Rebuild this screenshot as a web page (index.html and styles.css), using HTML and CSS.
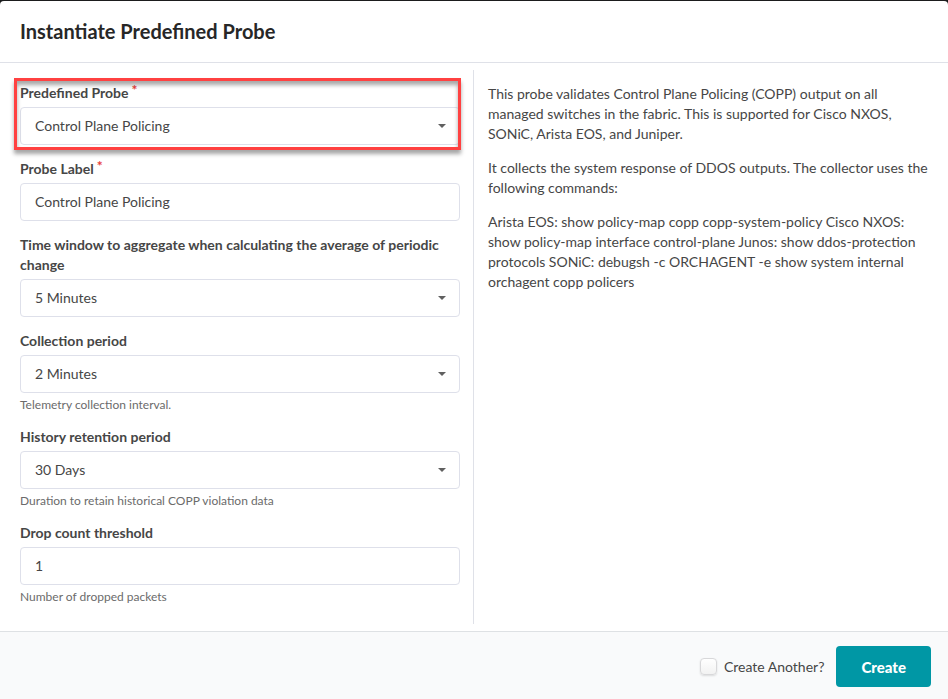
FILE: index.html
```
<!DOCTYPE html>
<html lang="en">

<head>
    <meta charset="UTF-8">
    <meta name="viewport" content="width=device-width, initial-scale=1.0">
    <title>Instantiate Predefined Probe</title>
    <link rel="stylesheet" href="styles.css">
</head>

<body>
    <form class="modal">
        <header class="modal-header">
            <h1>Instantiate Predefined Probe</h1>
        </header>

        <div class="modal-content">
            <div class="fields">
                <div class="field highlight">
                    <label for="probe" class="required">Predefined Probe</label>
                    <div class="dropdown">
                        <select id="probe">
                            <option>Control Plane Policing</option>
                        </select>
                    </div>
                </div>
                <div class="field">
                    <label for="label" class="required">Probe Label</label>
                    <input type="text" id="label" value="Control Plane Policing">
                </div>
                <div class="field">
                    <label for="window">Time window to aggregate when calculating the average of periodic change</label>
                    <div class="dropdown">
                        <select id="window">
                            <option>5 Minutes</option>
                        </select>
                    </div>
                </div>
                <div class="field">
                    <label for="collection">Collection period</label>
                    <div class="dropdown">
                        <select id="collection">
                            <option>2 Minutes</option>
                        </select>
                    </div>
                    <p class="help">Telemetry collection interval.</p>
                </div>
                <div class="field">
                    <label for="history">History retention period</label>
                    <div class="dropdown">
                        <select id="history">
                            <option>30 Days</option>
                        </select>
                    </div>
                    <p class="help">Duration to retain historical COPP violation data</p>
                </div>
                <div class="field">
                    <label for="threshold">Drop count threshold</label>
                    <input type="text" id="threshold" value="1">
                    <p class="help">Number of dropped packets</p>
                </div>
            </div>

            <div class="description">
                <p>This probe validates Control Plane Policing (COPP) output on all managed switches in the fabric. This is supported for Cisco NXOS, SONiC, Arista EOS, and Juniper.</p>
                <p>It collects the system response of DDOS outputs. The collector uses the following commands:</p>
                <p>Arista EOS: show policy-map copp copp-system-policy Cisco NXOS: show policy-map interface control-plane Junos: show ddos-protection protocols SONiC: debugsh -c ORCHAGENT -e show system internal orchagent copp policers</p>
            </div>
        </div>

        <footer class="modal-footer">
            <label class="another">
                <input type="checkbox">
                Create Another?
            </label>
            <button type="button" class="create">Create</button>
        </footer>
    </form>
</body>

</html>
```
FILE: styles.css
```
* {
    box-sizing: border-box;
}

body {
    margin: 0;
    background-color: #1b1c1d;
    font-family: Lato, "Liberation Sans", sans-serif;
    font-size: 14px;
    line-height: 20px;
    color: #464646;
}

.modal {
    display: flex;
    flex-direction: column;
    min-height: 100vh;
    border-top: 1px solid #1b1c1d;
}

.modal-header {
    padding: 16px 20px 17px;
    background-color: #fff;
    border-bottom: 1px solid #dfe1e8;
    border-radius: 4px 4px 0 0;
}

.modal-header h1 {
    margin: 0;
    font-size: 20px;
    line-height: 28px;
    font-weight: 700;
    color: #272727;
}

/* Two columns with a divider */
.modal-content {
    flex: 1;
    display: grid;
    grid-template-columns: 1fr 1fr;
    padding: 7px 0;
    background-color: #fff;
}

.fields {
    display: flex;
    flex-direction: column;
    gap: 14px;
    padding: 13px 13px 13px 20px;
    border-right: 1px solid #dfe1e8;
}

.field label {
    display: block;
    margin-bottom: 4px;
    font-weight: 700;
}

.required::after {
    content: "*";
    margin-left: 3px;
    vertical-align: top;
    line-height: 14px;
    color: #e8403a;
}

.field input,
.field select {
    display: block;
    width: 100%;
    height: 38px;
    padding: 0 14px 1px;
    border: 1px solid #dee0ea;
    border-radius: 4px;
    background-color: #fff;
    font: inherit;
    color: inherit;
    appearance: none;
}

.dropdown {
    position: relative;
}

.dropdown::after {
    content: "";
    position: absolute;
    top: 17px;
    right: 14px;
    border: 4px solid transparent;
    border-top-color: #606060;
    border-bottom: 0;
    pointer-events: none;
}

.help {
    margin: 4px 0 0;
    font-size: 12px;
    line-height: 16px;
    color: #6b6b6b;
}

/* Red frame around the probe selector */
.highlight {
    position: relative;
}

.highlight::before {
    content: "";
    position: absolute;
    inset: -5px -1px -5px -6px;
    border: 3px solid #ff4141;
    box-shadow: 0 4px 4px rgba(0, 0, 0, .35), inset 0 4px 4px rgba(0, 0, 0, .35);
    pointer-events: none;
    z-index: 1;
}

.description {
    padding: 14px 18px 14px 14px;
}

.description p {
    margin: 0 0 14px;
}

.modal-footer {
    display: flex;
    justify-content: flex-end;
    align-items: center;
    gap: 12px;
    padding: 14px 17px 12px;
    background-color: #f9fafb;
    border-top: 1px solid #dee1e4;
}

.another {
    display: flex;
    align-items: center;
    gap: 7px;
}

.another input {
    appearance: none;
    width: 17px;
    height: 17px;
    margin: 0;
    border: 1px solid #d8d8da;
    border-radius: 4px;
    background-image: linear-gradient(#fff, #f2f2f2);
    box-shadow: 0 1px 2px rgba(0, 0, 0, .12);
}

.create {
    height: 41px;
    padding: 0 25px;
    border: 0;
    border-radius: 4px;
    background-color: #0097a5;
    font: inherit;
    font-size: 15px;
    font-weight: 900;
    color: #fff;
}
```
